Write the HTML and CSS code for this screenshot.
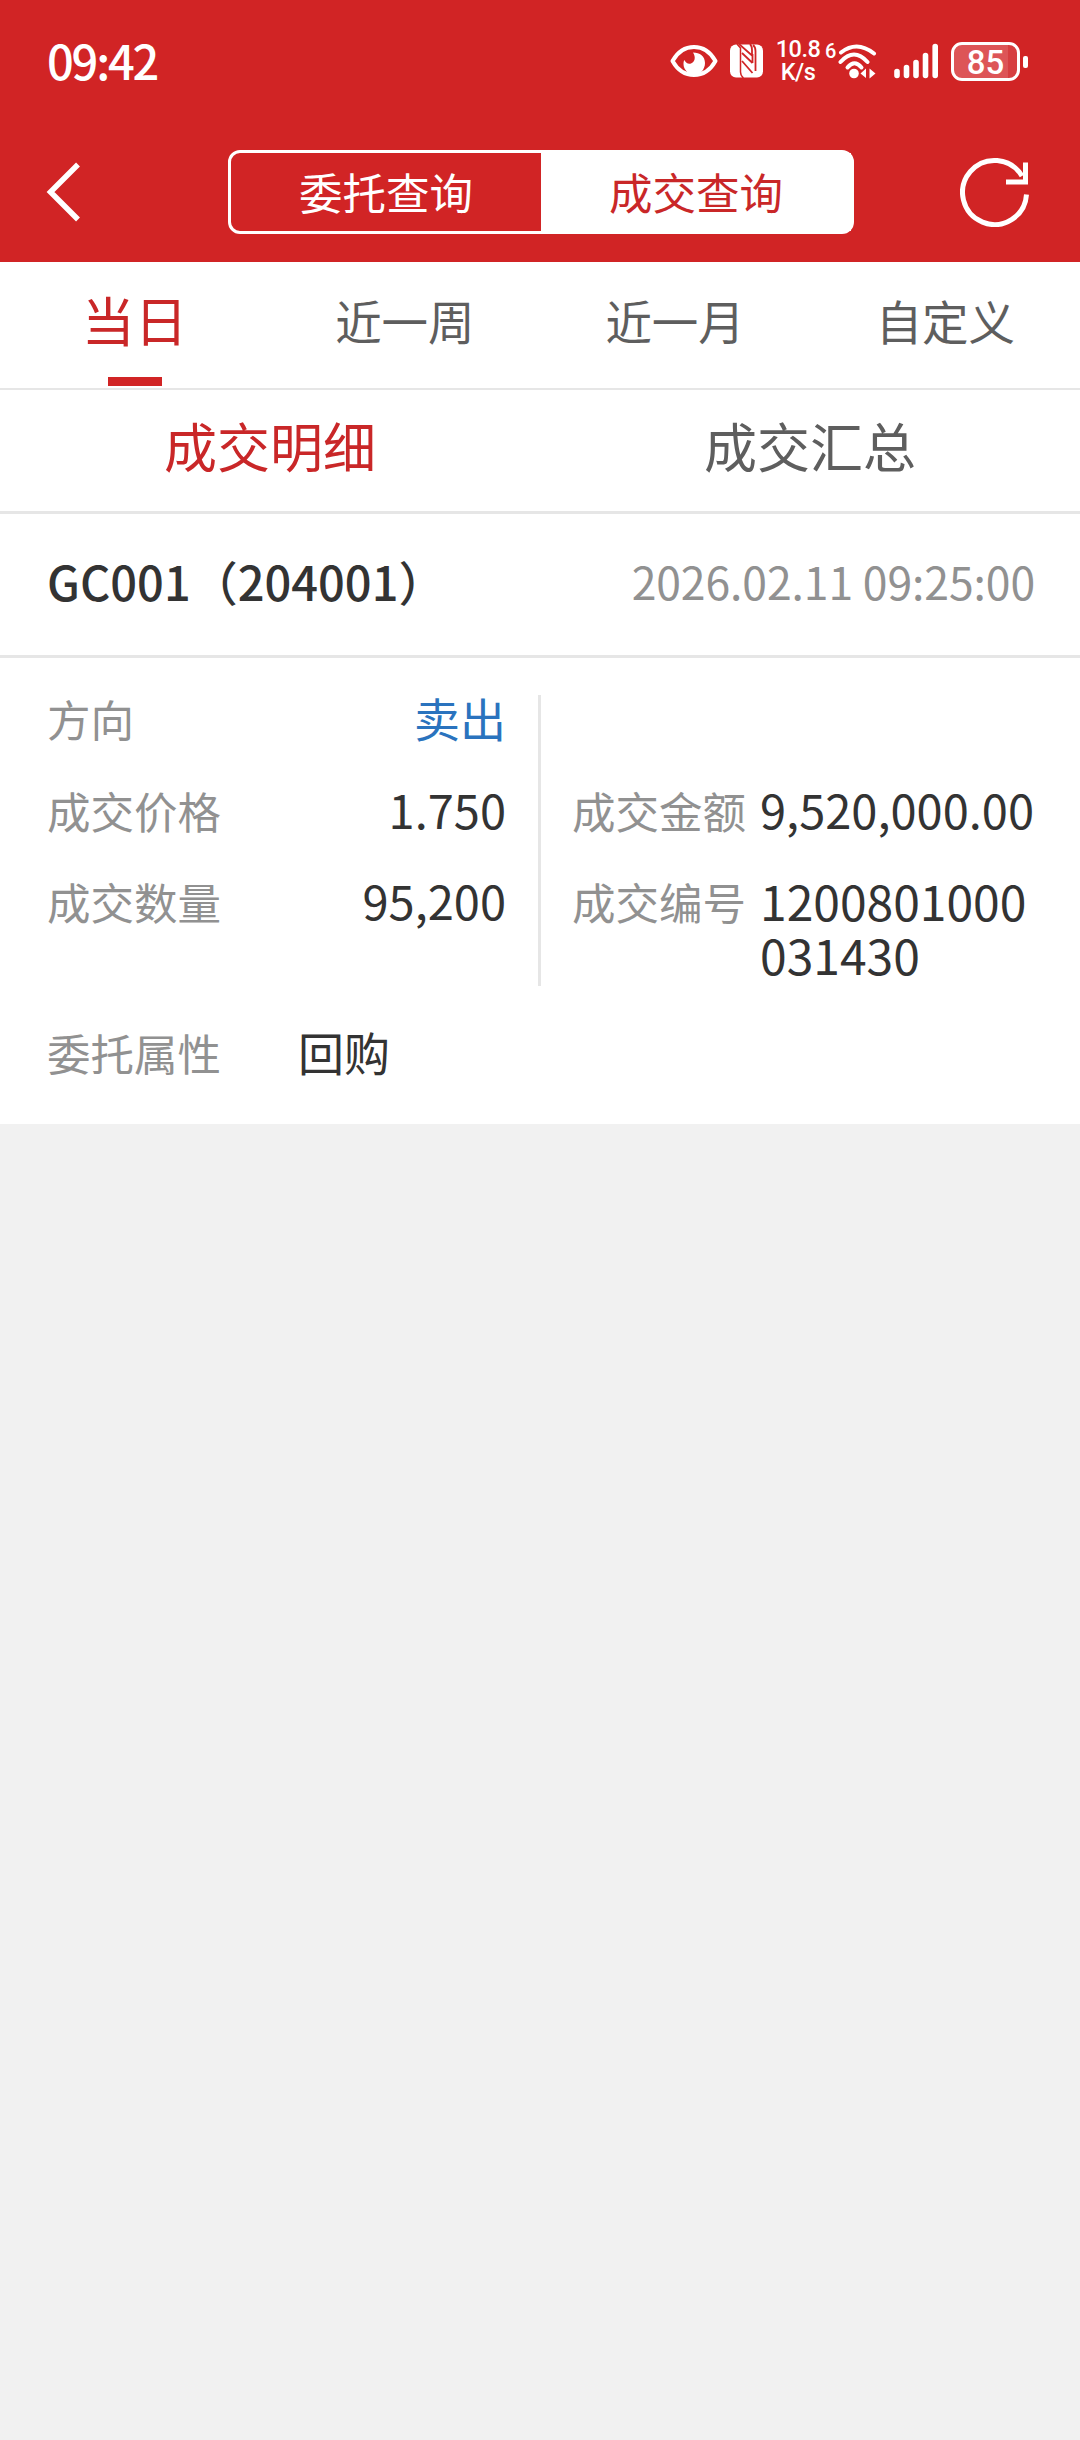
FILE: index.html
```html
<!DOCTYPE html>
<html lang="zh-CN">
<head>
  <meta charset="UTF-8">
  <meta name="viewport" content="width=device-width, initial-scale=1.0">
  <title>成交查询</title>
  <link rel="stylesheet" href="styles.css">
</head>
<body>
  <header class="header">
    <div class="status-bar">
      <span class="clock">09:42</span>
      <div class="status-icons">
        <!-- eye comfort -->
        <svg class="icon-eye" width="48" height="34" viewBox="0 0 48 34">
          <path d="M2.500 17C7 9 14 3 24 3s17 6 21.500 14C41 25 34 31 24 31S7 25 2.500 17z" fill="none" stroke="#fff" stroke-width="4" stroke-linejoin="round"/>
          <path d="M23 8.500c7 0 12 4 12 10.500S30 31 24.500 31 13.500 26 13.500 20c0-1.500.3-3 .8-4 1.500 3 4 4.500 6.700 3.500 4-1.500 5-6.500 2-11z" fill="#fff"/>
        </svg>
        <!-- nfc -->
        <svg class="icon-nfc" width="33" height="34" viewBox="0 0 33 34">
          <rect x="0" y="0.500" width="33" height="33" rx="6" fill="#fff"/>
          <path d="M7 0l3.500 4v24q0 4 3 6" fill="none" stroke="#d12425" stroke-width="1.500"/>
          <path d="M9 0l13 11.500V6q0-4-2-6M12 9l10.500 10M12 17l10.500 12M22.500 10v9M23 1q2.500 2 2.500 6v20" fill="none" stroke="#d12425" stroke-width="1.800"/>
        </svg>
        <div class="speed">10.8<br>K/s</div>
        <!-- wifi -->
        <span class="wifi-gen">6</span>
        <svg class="icon-wifi" width="41" height="38" viewBox="0 0 41 38">
          <g fill="none" stroke="#fff" stroke-width="4" stroke-linecap="round">
            <path d="M3 10.500Q19-2 36 11.500"/>
            <path d="M2.500 20Q16 5 29.500 20"/>
            <path d="M9.500 25.500Q16.500 17 23.500 25.500"/>
          </g>
          <circle cx="16" cy="31.500" r="4.800" fill="#fff"/>
          <path d="M22.500 31.500l5.500-5v9.500zM37.500 31.500l-6-5v10z" fill="#fff"/>
        </svg>
        <!-- signal -->
        <svg class="icon-signal" width="46" height="36" viewBox="0 0 46 36">
          <path d="M4 28.500v4M13.500 24.500v8M23 19.500v13M32.500 12.500v20M42.200 3.500v29" stroke="#fff" stroke-width="5.600" stroke-linecap="round"/>
        </svg>
        <div class="battery"><span>85</span></div>
      </div>
    </div>
    <div class="nav-bar">
      <svg class="icon-back" width="34" height="60" viewBox="0 0 34 60">
        <path d="M32 2.500L4.500 30l27.500 27.500" fill="none" stroke="#fff" stroke-width="5.500"/>
      </svg>
      <div class="switch">
        <div class="switch-item">委托查询</div>
        <div class="switch-item on">成交查询</div>
      </div>
      <svg class="icon-refresh" width="70" height="70" viewBox="0 0 70 70">
        <path d="M66.500 37.500A32 32 0 1 1 62 19" fill="none" stroke="#fff" stroke-width="5"/>
        <path d="M65.500 5.500v19.500H46" fill="none" stroke="#fff" stroke-width="5"/>
      </svg>
    </div>
  </header>

  <nav class="tabs">
    <div class="tab active">当日</div>
    <div class="tab">近一周</div>
    <div class="tab">近一月</div>
    <div class="tab">自定义</div>
  </nav>

  <nav class="sub-tabs">
    <div class="sub-tab active">成交明细</div>
    <div class="sub-tab">成交汇总</div>
  </nav>

  <section class="record">
    <div class="record-head">
      <span class="name">GC001（204001）</span>
      <span class="time">2026.02.11 09:25:00</span>
    </div>
    <div class="record-body">
      <div class="columns">
        <div class="col left">
          <div class="row"><span class="label">方向</span><span class="value sell">卖出</span></div>
          <div class="row"><span class="label">成交价格</span><span class="value">1.750</span></div>
          <div class="row"><span class="label">成交数量</span><span class="value">95,200</span></div>
        </div>
        <div class="col right">
          <div class="row"></div>
          <div class="row"><span class="label">成交金额</span><span class="value">9,520,000.00</span></div>
          <div class="row"><span class="label">成交编号</span><span class="value number">1200801000<br>031430</span></div>
        </div>
      </div>
      <div class="row attr"><span class="label">委托属性</span><span class="value">回购</span></div>
    </div>
  </section>
</body>
</html>
```
FILE: styles.css
```css
* {
  box-sizing: border-box;
  margin: 0;
  padding: 0;
}
body {
  min-height: 2440px;
  background-color: #f1f1f1;
  color: #333;
  font-family: "Noto Sans CJK SC", sans-serif;
}
svg {
  display: block;
}
/* Header */
.header {
  height: 262px;
  background-color: #d12425;
  color: #fff;
}
.status-bar {
  display: flex;
  justify-content: space-between;
  height: 122px;
  padding: 0 52px 0 47px;
}
.clock {
  font-size: 47px;
  font-weight: 500;
  line-height: 119px;
  letter-spacing: -2.2px;
}
.status-icons {
  display: flex;
  align-items: center;
}
.icon-eye {
  margin-right: 12px;
}
.icon-nfc {
  margin-right: 11px;
}
.speed {
  width: 48px;
  margin-right: 3px;
  font-family: Roboto, sans-serif;
  font-size: 23.5px;
  font-weight: 500;
  line-height: 23px;
  letter-spacing: -0.5px;
  text-align: center;
}
.wifi-gen {
  width: 13px;
  margin-bottom: 20px;
  font-family: Roboto, sans-serif;
  font-size: 20px;
  font-weight: 500;
  line-height: 24px;
}
.icon-wifi {
  margin-right: 14px;
}
.icon-signal {
  margin-right: 12px;
}
.battery {
  position: relative;
  width: 69px;
  height: 39px;
  margin-right: 8px;
  border: 3px solid #fff;
  border-radius: 11px;
  background: linear-gradient(90deg, #dd5557 86%, #d63e40 86%);
  font-family: Roboto, sans-serif;
  font-size: 33px;
  font-weight: 500;
  line-height: 35px;
  text-align: center;
}
.battery::after {
  content: "";
  position: absolute;
  top: 11px;
  right: -11px;
  width: 5px;
  height: 12px;
  border-radius: 2px;
  background-color: #fff;
}
.nav-bar {
  display: flex;
  justify-content: space-between;
  align-items: center;
  height: 139px;
  padding: 0 50px 0 46px;
}
.switch {
  display: flex;
  width: 626px;
  height: 84px;
  margin-left: 42px;
  border: 3px solid #fff;
  border-radius: 12px;
}
.switch-item {
  flex: 1;
  font-size: 43.5px;
  line-height: 77px;
  text-align: center;
}
.switch-item.on {
  background-color: #fff;
  color: #c92728;
}
/* Tabs */
.tabs {
  display: flex;
  height: 128px;
  background-color: #fff;
  border-bottom: 2px solid #e6e6e6;
}
.tab {
  position: relative;
  flex: 1;
  padding-left: 1px;
  color: #5e5e5e;
  font-size: 46.5px;
  line-height: 115px;
  text-align: center;
}
.tab.active {
  padding: 0;
  color: #c92728;
  font-size: 53px;
}
.tab.active::after {
  content: "";
  position: absolute;
  left: 108px;
  bottom: 2px;
  width: 54px;
  height: 9px;
  background-color: #d12425;
}
.sub-tabs {
  display: flex;
  height: 124px;
  background-color: #fff;
  border-bottom: 3px solid #e6e6e6;
}
.sub-tab {
  flex: 1;
  color: #5e5e5e;
  font-size: 53px;
  line-height: 110px;
  text-align: center;
}
.sub-tab.active {
  color: #c92728;
}
/* Record */
.record {
  background-color: #fff;
}
.record-head {
  display: flex;
  justify-content: space-between;
  height: 144px;
  padding: 0 45px 0 47px;
  border-bottom: 3px solid #e6e6e6;
  line-height: 133px;
}
.name {
  font-size: 47px;
  font-weight: 500;
}
.time {
  color: #919191;
  font-size: 44.5px;
  line-height: 134px;
  letter-spacing: -0.1px;
}
.record-body {
  height: 466px;
  padding-top: 37px;
}
.columns {
  display: flex;
  height: 291px;
}
.col.left {
  width: 541px;
  padding: 0 32px 0 47px;
  border-right: 3px solid #e6e6e6;
}
.col.right {
  flex: 1;
  padding-left: 31px;
}
.row {
  display: flex;
  height: 91.5px;
  line-height: 47px;
}
.left .row {
  justify-content: space-between;
}
.label {
  color: #919191;
  font-size: 43.5px;
}
.value {
  font-size: 47px;
  line-height: 44px;
}
.right .value {
  margin: -5px 0 0 14px;
  line-height: 54px;
}
.right .number {
  font-size: 48px;
}
.sell {
  color: #2a73be;
  font-size: 46px;
}
.attr {
  margin-top: 43px;
  padding-left: 47px;
}
.attr .value {
  margin-left: 77px;
  font-size: 46px;
}
```
